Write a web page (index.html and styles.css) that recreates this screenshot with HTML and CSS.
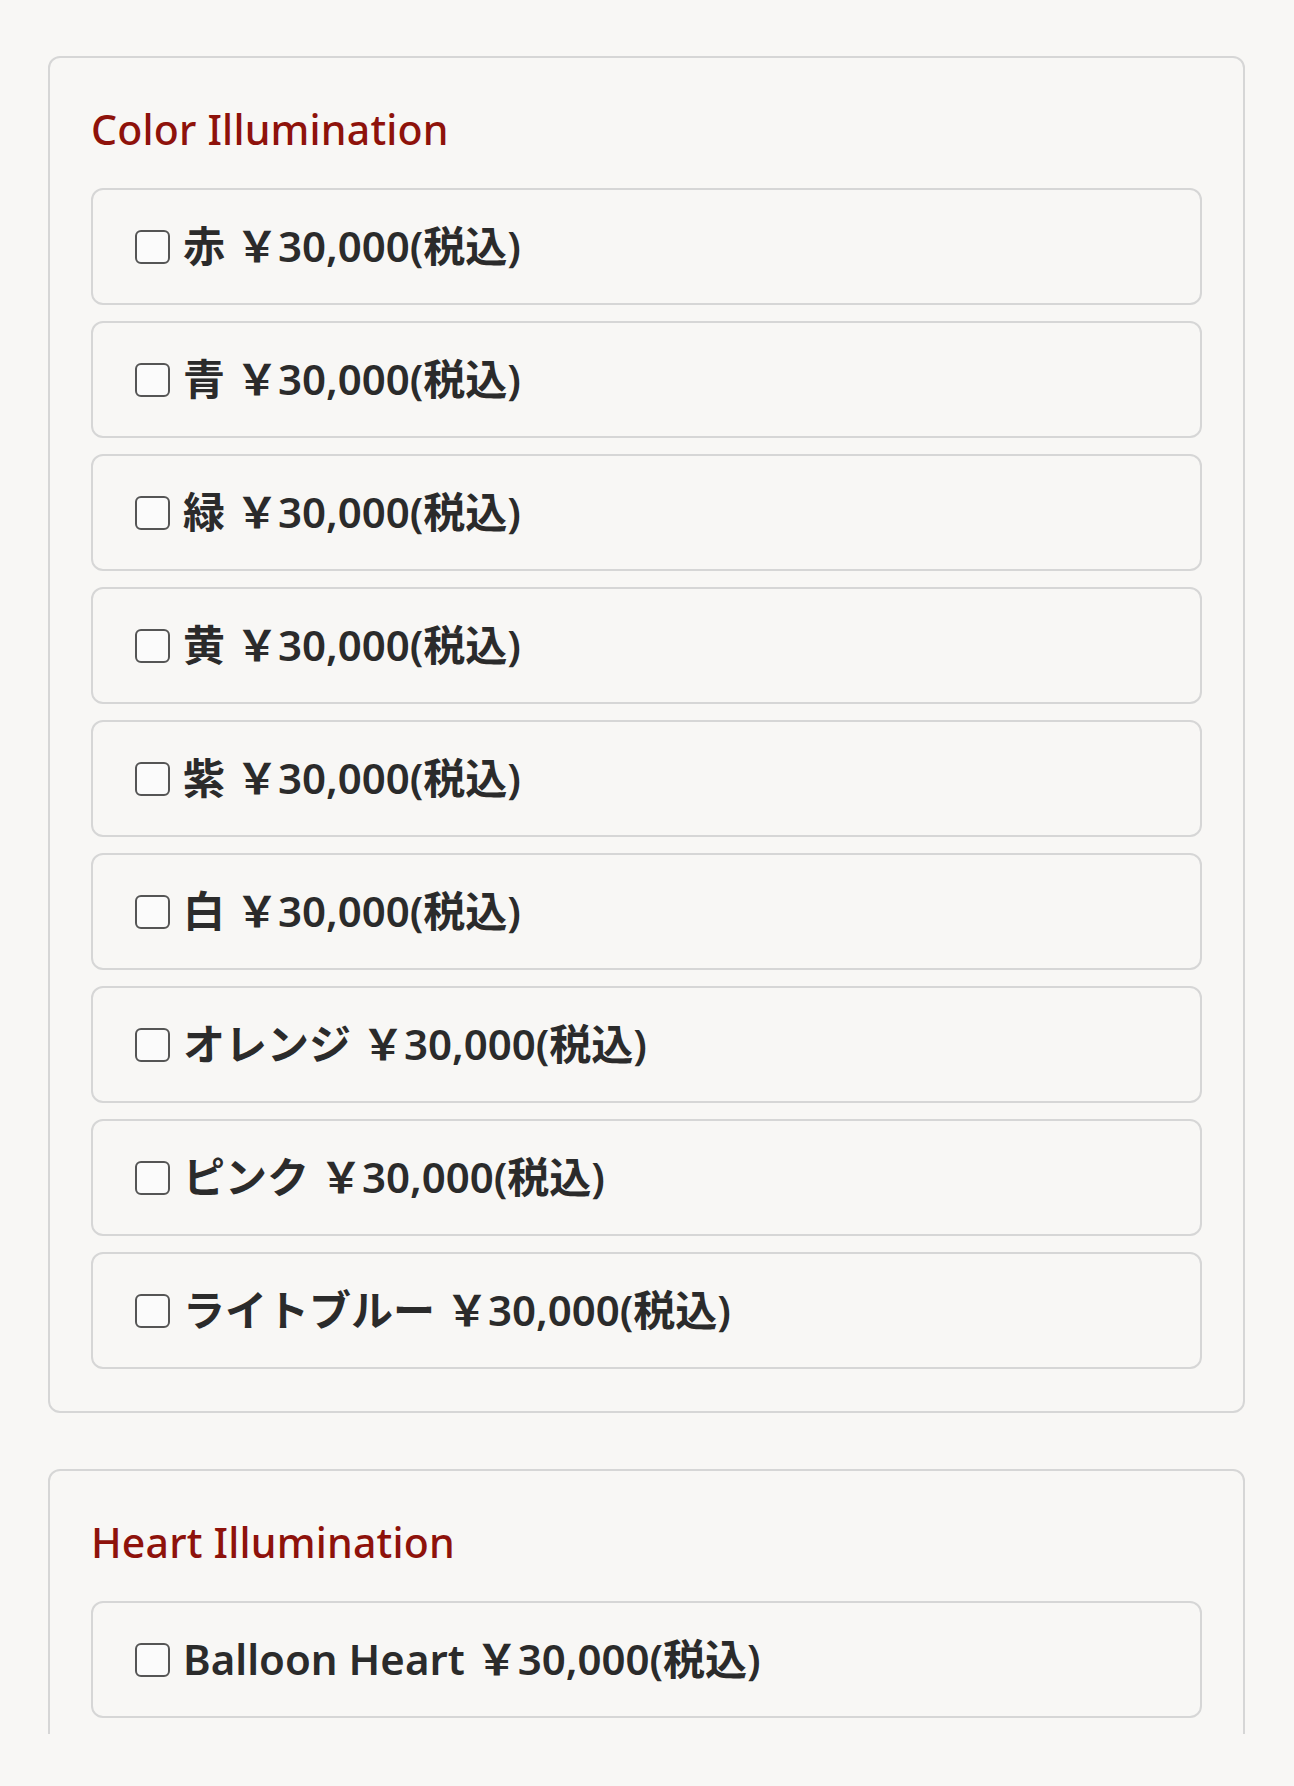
FILE: index.html
```html
<!DOCTYPE html>
<html lang="ja">
<head>
  <meta charset="UTF-8">
  <meta name="viewport" content="width=device-width, initial-scale=1.0">
  <title>Illumination</title>
  <link rel="stylesheet" href="styles.css">
</head>
<body>
  <div class="page">

    <!-- Color -->
    <section class="group">
      <h2>Color Illumination</h2>
      <ul class="options">
        <li><label class="option"><input type="checkbox" name="color" value="red"><span>赤 ￥30,000(税込)</span></label></li>
        <li><label class="option"><input type="checkbox" name="color" value="blue"><span>青 ￥30,000(税込)</span></label></li>
        <li><label class="option"><input type="checkbox" name="color" value="green"><span>緑 ￥30,000(税込)</span></label></li>
        <li><label class="option"><input type="checkbox" name="color" value="yellow"><span>黄 ￥30,000(税込)</span></label></li>
        <li><label class="option"><input type="checkbox" name="color" value="purple"><span>紫 ￥30,000(税込)</span></label></li>
        <li><label class="option"><input type="checkbox" name="color" value="white"><span>白 ￥30,000(税込)</span></label></li>
        <li><label class="option"><input type="checkbox" name="color" value="orange"><span>オレンジ ￥30,000(税込)</span></label></li>
        <li><label class="option"><input type="checkbox" name="color" value="pink"><span>ピンク ￥30,000(税込)</span></label></li>
        <li><label class="option"><input type="checkbox" name="color" value="lightblue"><span>ライトブルー ￥30,000(税込)</span></label></li>
      </ul>
    </section>

    <!-- Heart -->
    <section class="group">
      <h2>Heart Illumination</h2>
      <ul class="options">
        <li><label class="option"><input type="checkbox" name="heart" value="balloon"><span>Balloon Heart ￥30,000(税込)</span></label></li>
        <li><label class="option"><input type="checkbox" name="heart" value="neon"></label></li>
      </ul>
    </section>

  </div>
</body>
</html>
```

FILE: styles.css
```css
:root{
  --bg:#f8f7f5;
  --line:#d6d6d6;
  --accent:#8e120b;
  --text:#2b2b2b;
}
*{margin:0;padding:0;box-sizing:border-box;}
body{background:var(--bg);color:var(--text);font-family:"Noto Sans","Noto Sans CJK JP",sans-serif;}
.page{height:1734px;overflow:hidden;padding:56px 49px 0 48px;}

.group{border:2px solid var(--line);border-radius:12px;padding:41px 41px 42px;}
.group+.group{margin-top:56px;}
.group h2{color:var(--accent);font-size:41px;font-weight:500;letter-spacing:.2px;line-height:60px;margin-bottom:29px;}

.options{list-style:none;display:flex;flex-direction:column;gap:16px;}
.option{display:flex;align-items:center;gap:13px;height:117px;padding:0 42px;border:2px solid var(--line);border-radius:12px;
        font-size:42px;font-weight:600;white-space:pre;cursor:pointer;}
.option span{padding-bottom:7px;}
.option input{appearance:none;-webkit-appearance:none;width:35px;height:34px;flex:none;border:2px solid #555;border-radius:6px;background:#fbfbfb;}
.option input:checked{background:var(--accent);border-color:var(--accent);}
```
